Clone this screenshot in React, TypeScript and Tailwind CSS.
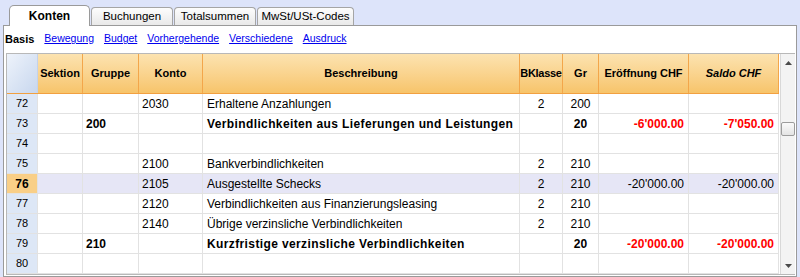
import React from 'react'

type Row = {
  n: number
  gruppe?: string
  konto?: string
  text?: string
  bk?: string
  gr?: string
  open?: string
  saldo?: string
  bold?: boolean
  selected?: boolean
}

const rows: Row[] = [
  { n: 72, konto: '2030', text: 'Erhaltene Anzahlungen', bk: '2', gr: '200' },
  {
    n: 73,
    gruppe: '200',
    text: 'Verbindlichkeiten aus Lieferungen und Leistungen',
    gr: '20',
    open: "-6'000.00",
    saldo: "-7'050.00",
    bold: true,
  },
  { n: 74 },
  { n: 75, konto: '2100', text: 'Bankverbindlichkeiten', bk: '2', gr: '210' },
  {
    n: 76,
    konto: '2105',
    text: 'Ausgestellte Schecks',
    bk: '2',
    gr: '210',
    open: "-20'000.00",
    saldo: "-20'000.00",
    selected: true,
  },
  { n: 77, konto: '2120', text: 'Verbindlichkeiten aus Finanzierungsleasing', bk: '2', gr: '210' },
  { n: 78, konto: '2140', text: 'Übrige verzinsliche Verbindlichkeiten', bk: '2', gr: '210' },
  {
    n: 79,
    gruppe: '210',
    text: 'Kurzfristige verzinsliche Verbindlichkeiten',
    gr: '20',
    open: "-20'000.00",
    saldo: "-20'000.00",
    bold: true,
  },
  { n: 80 },
]

const cols = 'grid grid-cols-[31px_45px_56px_64px_317px_43px_36px_90px_90px]'
const font = { fontFamily: '"Liberation Sans", Arial, sans-serif' }

function Tab({ label, active }: { label: string; active?: boolean }) {
  return active ? (
    <div className="h-[21px] w-[81px] mr-[1px] -mb-[1px] rounded-t-[5px] border border-b-0 border-[#9a9a9a] bg-white flex items-center justify-center text-[12px] font-bold text-black z-10">
      {label}
    </div>
  ) : (
    <div
      className="h-[18px] mr-[1px] rounded-t-[4px] border border-b-0 border-[#a5a5a5] bg-gradient-to-b from-[#fdfdfd] to-[#e9e9e9] flex items-center justify-center text-[11.5px] text-black"
      style={{ width: label === 'MwSt/USt-Codes' ? 97 : 82 }}
    >
      {label}
    </div>
  )
}

function Cell({ children, className = '' }: { children?: React.ReactNode; className?: string }) {
  return (
    <div className={`h-[20px] border-r border-b border-[#e2e2e2] flex items-center overflow-hidden whitespace-nowrap ${className}`}>
      {children}
    </div>
  )
}

export default function App() {
  return (
    <div className="w-[800px] h-[277px] bg-[#dde4fa] overflow-hidden text-black" style={font}>
      <div className="h-[25px] flex items-end pl-[9px]">
        <Tab label="Konten" active />
        <Tab label="Buchungen" />
        <Tab label="Totalsummen" />
        <Tab label="MwSt/USt-Codes" />
      </div>
      <div className="mx-[3px] h-[252px] border border-[#9a9a9a] bg-white">
        <div className="h-[27px] flex items-center gap-[10px] pl-[1px] pb-[1px] text-[10.5px]">
          <span className="font-bold text-[11px]">Basis</span>
          <span className="text-[#0000ee] underline">Bewegung</span>
          <span className="text-[#0000ee] underline">Budget</span>
          <span className="text-[#0000ee] underline">Vorhergehende</span>
          <span className="text-[#0000ee] underline">Verschiedene</span>
          <span className="text-[#0000ee] underline">Ausdruck</span>
        </div>
        <div className="ml-[2px] mr-[1px] h-[222px] border border-[#b8b8b8] flex">
          <div className="w-[772px]">
            <div className={`${cols} h-[40px] border-b border-[#f2a040] text-[11px] font-bold`}>
              <div className="bg-gradient-to-br from-[#eef3fb] to-[#c8d7ee] border-r border-[#c4d2ea]" />
              {['Sektion', 'Gruppe', 'Konto', 'Beschreibung', 'BKlasse', 'Gr', 'Eröffnung CHF', 'Saldo CHF'].map((h) => (
                <div
                  key={h}
                  className={`bg-gradient-to-b from-[#fce3b0] to-[#f7c46a] border-r border-[#f3a64a] flex items-center justify-center whitespace-nowrap ${
                    h === 'Saldo CHF' ? 'italic' : ''
                  } ${h === 'BKlasse' ? 'tracking-[-0.3px]' : ''}`}
                >
                  {h}
                </div>
              ))}
            </div>
            {rows.map((r) => {
              const bg = r.selected ? 'bg-[#e6e6f6]' : 'bg-white'
              const b = r.bold ? 'font-bold tracking-[0.38px]' : ''
              const red = r.bold ? 'font-bold text-[#ff0000]' : ''
              return (
                <div key={r.n} className={`${cols} text-[12px]`}>
                  <Cell
                    className={`justify-center border-[#c9d6ec] ${
                      r.selected ? 'bg-[#f9cf87] font-bold text-[12px]' : 'bg-[#dde7f6] text-[11px]'
                    }`}
                  >
                    {r.n}
                  </Cell>
                  <Cell className={bg} />
                  <Cell className={`${bg} pl-[3px] font-bold`}>{r.gruppe}</Cell>
                  <Cell className={`${bg} pl-[3px]`}>{r.konto}</Cell>
                  <Cell className={`${bg} pl-[4px] ${b}`}>{r.text}</Cell>
                  <Cell className={`${bg} justify-center`}>{r.bk}</Cell>
                  <Cell className={`${bg} justify-center ${r.bold ? 'font-bold' : ''}`}>{r.gr}</Cell>
                  <Cell className={`${bg} justify-end pr-[4px] ${red}`}>{r.open}</Cell>
                  <Cell className={`${bg} justify-end pr-[4px] ${red}`}>{r.saldo}</Cell>
                </div>
              )
            })}
          </div>
          <div className="w-[15px] ml-[1px] bg-[#f3f3f3] border-l border-[#d8d8d8] flex flex-col items-center">
            <div className="h-[17px] flex items-center justify-center">
              <svg width="7" height="4" viewBox="0 0 7 4">
                <path d="M0 4 L3.5 0 L7 4 Z" fill="#4a4a4a" />
              </svg>
            </div>
            <div className="mt-[51px] w-[14px] h-[14px] rounded-[2px] border border-[#9c9c9c] bg-gradient-to-b from-[#fafafa] to-[#e4e4e4]" />
            <div className="flex-1" />
            <div className="h-[17px] flex items-center justify-center">
              <svg width="7" height="4" viewBox="0 0 7 4">
                <path d="M0 0 L3.5 4 L7 0 Z" fill="#4a4a4a" />
              </svg>
            </div>
          </div>
        </div>
      </div>
    </div>
  )
}
